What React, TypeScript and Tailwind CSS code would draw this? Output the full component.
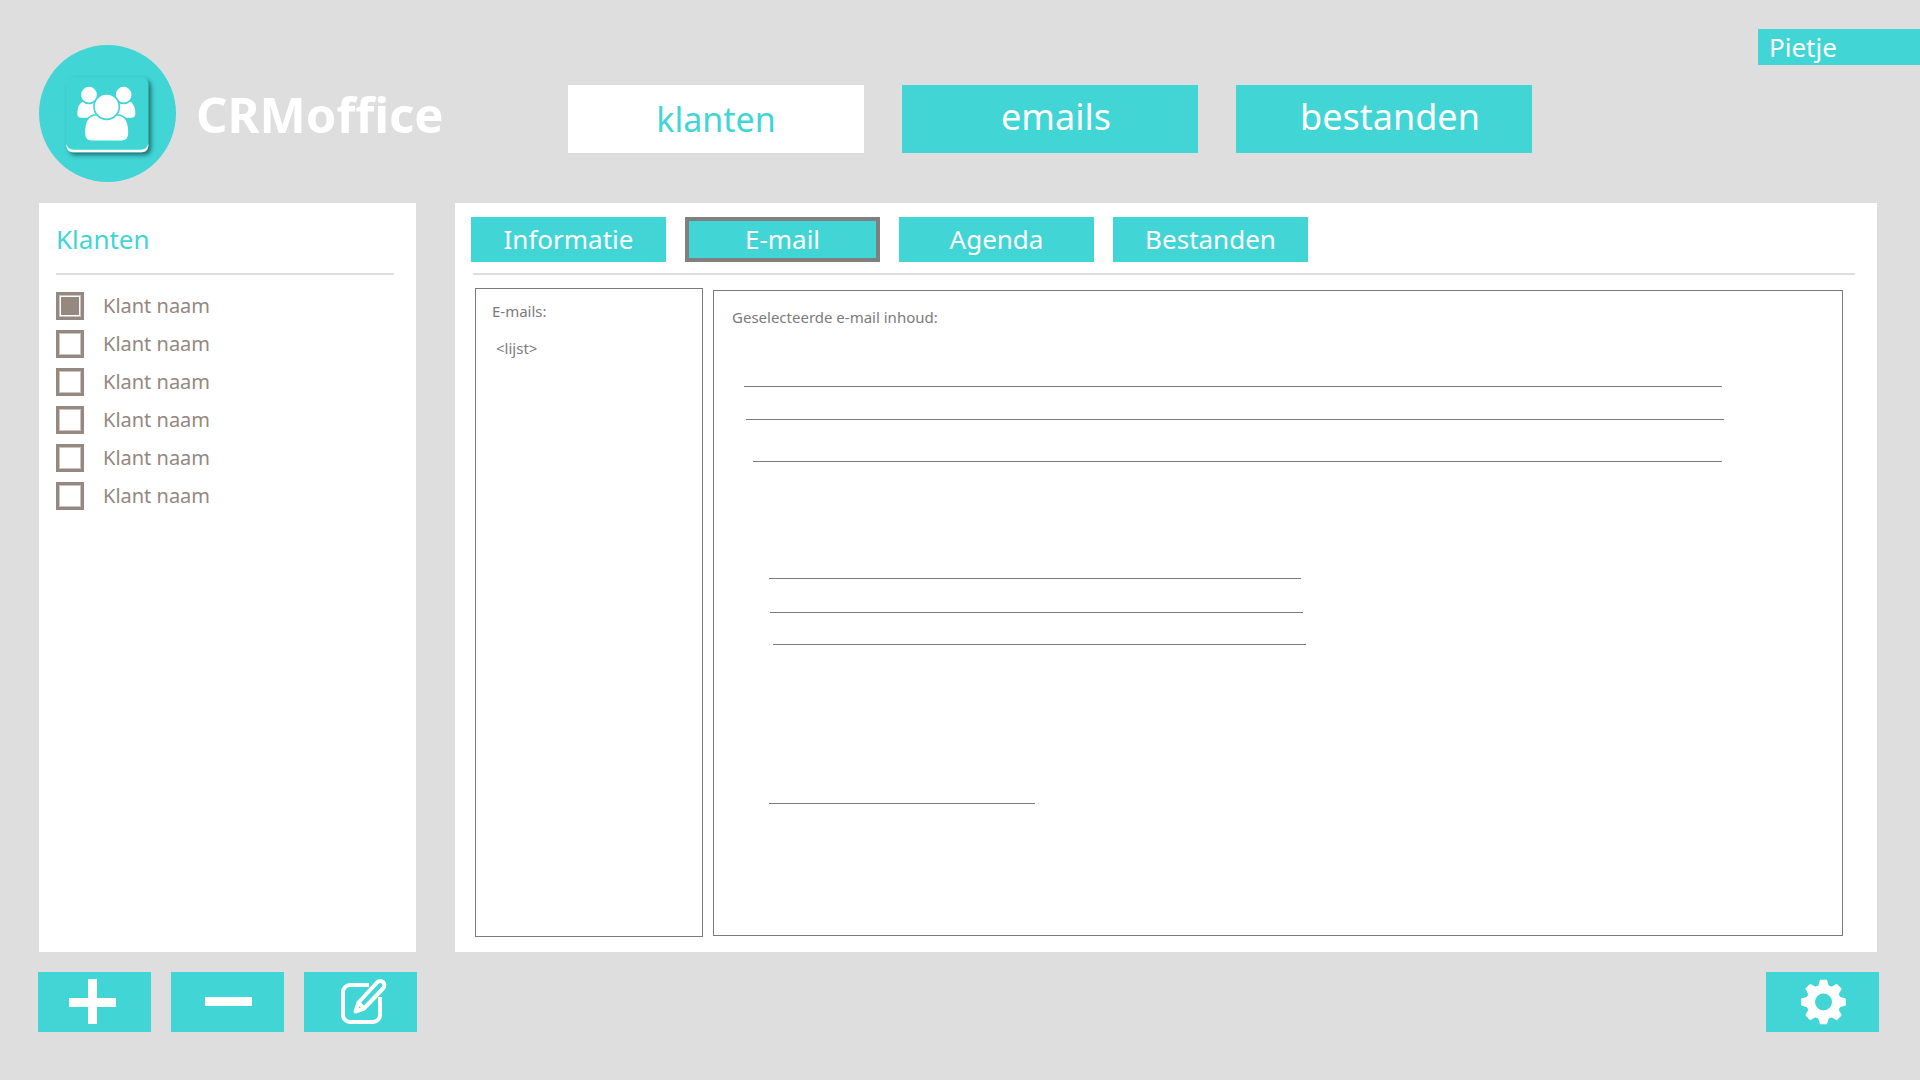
import React, { useState } from "react";

const sections = ["klanten", "emails", "bestanden"];
const tabs = ["Informatie", "E-mail", "Agenda", "Bestanden"];
const clients = [1, 2, 3, 4, 5, 6];

function Logo() {
  return (
    <svg viewBox="59 43 411 411" className="size-[137px] shrink-0" aria-hidden="true">
      <defs>
        <filter id="tile-shadow" x="-20%" y="-20%" width="150%" height="150%">
          <feDropShadow dx="8" dy="8" stdDeviation="7" floodColor="#0b3a3a" floodOpacity="0.7" />
        </filter>
      </defs>
      <circle cx="264.500" cy="248.500" r="205.500" fill="#41d5d5" />
      <rect x="141" y="140" width="246" height="225" rx="20" fill="#41d5d5" filter="url(#tile-shadow)" />
      <path fill="#fff" d="M141 340Q145 357 164 357H364Q383 357 387 340V345Q385 365 364 365H164Q143 365 141 345Z" />
      <g fill="#fff">
        <path d="M190 213C178 219 174 234 174 250Q174 261 186 261H240V216Z" />
        <path d="M333 213C344 219 348 234 348 250Q348 261 336 261H284V216Z" />
        <g stroke="#41d5d5" strokeWidth="5">
          <circle cx="209" cy="192" r="26" />
          <circle cx="313" cy="192" r="26" />
          <path d="M224 253C203 257 195 280 195 306Q195 332 217 332H307Q329 332 329 306C329 280 321 257 300 253Z" />
          <circle cx="262" cy="228" r="38" />
        </g>
      </g>
    </svg>
  );
}

function PlusIcon() {
  return (
    <svg viewBox="0 0 113 60" className="h-[60px] w-[113px]" aria-hidden="true">
      <path fill="#fff" d="M50 7H59V26H78V35H59V52H50V35H31V26H50Z" />
    </svg>
  );
}

function MinusIcon() {
  return (
    <svg viewBox="0 0 113 60" className="h-[60px] w-[113px]" aria-hidden="true">
      <path fill="#fff" d="M34 25H81V34H34Z" />
    </svg>
  );
}

function EditIcon() {
  return (
    <svg viewBox="0 0 113 60" className="h-[60px] w-[113px]" fill="none" stroke="#fff" aria-hidden="true">
      <path strokeWidth="4" d="M65 13H46A7 7 0 0 0 39 20V43A7 7 0 0 0 46 50H69A7 7 0 0 0 76 43V25" />
      <path
        strokeWidth="4"
        strokeLinejoin="round"
        d="M73 10.500L54.500 30.500L51.500 39.500L60 36.500L79 16.500C83 12 77.500 6 73 10.500ZM54.500 30.500L60 36.500"
      />
    </svg>
  );
}

function GearIcon() {
  const teeth = [0, 45, 90, 135, 180, 225, 270, 315];
  return (
    <svg viewBox="0 0 113 60" className="h-[60px] w-[113px]" aria-hidden="true">
      <g transform="translate(57.500 30)">
        <g fill="#fff">
          <circle r="17" />
          {teeth.map((angle) => (
            <path key={angle} transform={`rotate(${angle})`} d="M-3.500 -22.300H3.500L5 -17L8 -14H-8L-5 -17Z" />
          ))}
        </g>
        <circle r="8.500" fill="#41d5d5" />
      </g>
    </svg>
  );
}

const actionClass = "h-[60px] w-[113px] bg-[#41d5d5]";

export default function App() {
  const [section, setSection] = useState("klanten");
  const [tab, setTab] = useState("E-mail");
  const [selected, setSelected] = useState<number[]>([1]);

  const toggle = (id: number) =>
    setSelected((ids) => (ids.includes(id) ? ids.filter((i) => i !== id) : [...ids, id]));

  return (
    <div className="flex min-h-screen flex-col bg-[#dedede] font-['Noto_Sans',sans-serif] text-[#7b7b7b]">
      <header className="flex min-h-[203px] items-start pl-[39px]">
        <div className="flex w-[529px] shrink-0 items-center gap-5 pt-[45px]">
          <Logo />
          <h1 className="text-[49px] leading-[60px] font-bold text-white">CRMoffice</h1>
        </div>
        <nav className="flex gap-[38px] pt-[85px]">
          {sections.map((name) => (
            <button
              key={name}
              type="button"
              onClick={() => setSection(name)}
              className={
                section === name
                  ? "h-[68px] w-[296px] bg-white text-[34px] leading-[48px] text-[#41d5d5]"
                  : "h-[68px] w-[296px] bg-[#41d5d5] pb-1 pl-3 text-[36px] leading-[48px] text-white"
              }
            >
              {name}
            </button>
          ))}
        </nav>
        <button
          type="button"
          className="mt-[29px] ml-auto h-9 w-[162px] bg-[#41d5d5] pl-[11px] text-left text-[26px] leading-9 text-white"
        >
          Pietje
        </button>
      </header>

      <main className="flex flex-1 gap-[39px] pr-[43px] pl-[39px]">
        <aside className="w-[377px] shrink-0 bg-white pt-[18px] pr-[22px] pl-[17px]">
          <h2 className="text-[26px] leading-9 text-[#41d5d5]">Klanten</h2>
          <hr className="mt-4 border-t-2 border-[#dedede]" />
          <ul className="mt-[17px] flex flex-col gap-[10px]">
            {clients.map((id) => (
              <li key={id}>
                <label className="flex h-7 items-center gap-[19px] text-[20px] leading-7 text-[#948880]">
                  <input
                    type="checkbox"
                    checked={selected.includes(id)}
                    onChange={() => toggle(id)}
                    className="size-7 appearance-none border-3 border-[#948880] bg-clip-content p-[2px] shadow-[inset_0_0_0_1px_#c9c3bf] checked:bg-[#948880]"
                  />
                  Klant naam
                </label>
              </li>
            ))}
          </ul>
        </aside>

        <section className="flex flex-1 flex-col bg-white pt-[14px] pb-[15px]">
          <div className="flex gap-[19px] pl-4">
            {tabs.map((name) => (
              <button
                key={name}
                type="button"
                onClick={() => setTab(name)}
                className={
                  tab === name
                    ? "h-[45px] w-[195px] border-4 border-[#808080] bg-[#41d5d5] pb-[2px] text-[26px] leading-8 text-white"
                    : "h-[45px] w-[195px] bg-[#41d5d5] pb-[2px] text-[26px] leading-8 text-white"
                }
              >
                {name}
              </button>
            ))}
          </div>
          <hr className="mt-[11px] mr-[22px] ml-[18px] border-t-2 border-[#dedede]" />
          <div className="mt-[13px] mr-[34px] ml-5 flex flex-1 gap-[10px]">
            <div className="w-[228px] shrink-0 border border-[#7b7b7b] px-4 pt-[10px]">
              <h3 className="text-[15px] leading-6">E-mails:</h3>
              <p className="mt-[13px] pl-1 text-[15px] leading-6">&lt;lijst&gt;</p>
            </div>
            <article className="mt-[2px] mb-px flex-1 border border-[#7b7b7b] pt-[14px] pr-[120px] pl-[18px]">
              <h3 className="text-[15px] leading-6">Geselecteerde e-mail inhoud:</h3>
              <hr className="mt-[57px] ml-3 border-[#7b7b7b]" />
              <hr className="mt-8 -mr-[2px] ml-[14px] border-[#7b7b7b]" />
              <hr className="mt-[41px] ml-[21px] border-[#7b7b7b]" />
              <hr className="mt-[116px] ml-[37px] w-[532px] border-[#7b7b7b]" />
              <hr className="mt-[33px] ml-[38px] w-[533px] border-[#7b7b7b]" />
              <hr className="mt-[31px] ml-[41px] w-[533px] border-[#7b7b7b]" />
              <hr className="mt-[158px] ml-[37px] w-[266px] border-[#7b7b7b]" />
            </article>
          </div>
        </section>
      </main>

      <footer className="flex gap-5 pt-5 pr-[41px] pb-12 pl-[38px]">
        <button type="button" aria-label="Toevoegen" className={actionClass}>
          <PlusIcon />
        </button>
        <button type="button" aria-label="Verwijderen" className={actionClass}>
          <MinusIcon />
        </button>
        <button type="button" aria-label="Bewerken" className={actionClass}>
          <EditIcon />
        </button>
        <button type="button" aria-label="Instellingen" className={`${actionClass} ml-auto`}>
          <GearIcon />
        </button>
      </footer>
    </div>
  );
}
